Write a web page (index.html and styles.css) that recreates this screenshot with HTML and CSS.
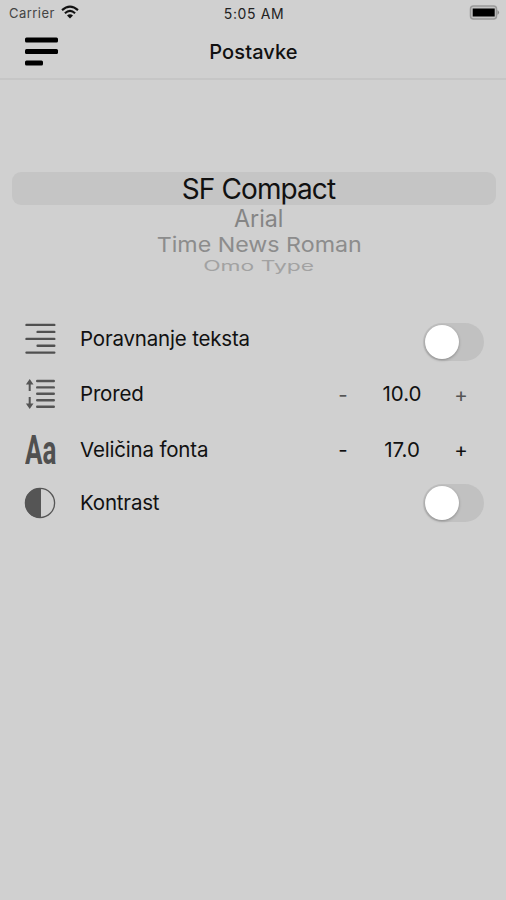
FILE: index.html
```html
<!DOCTYPE html>
<html lang="hr">
<head>
<meta charset="UTF-8">
<meta name="viewport" content="width=device-width, initial-scale=1.0">
<title>Postavke</title>
<link rel="stylesheet" href="styles.css">
</head>
<body>
<div class="status">
  <div class="carrier">
    <span>Carrier</span>
    <svg class="wifi" width="18" height="14" viewBox="0 0 18 14">
      <path d="M1 5.1Q9 -2 17 5.1M3.9 8.2Q9 3.7 14.1 8.2" fill="none" stroke="#111" stroke-width="2.1"/>
      <path d="M6 10.6Q9 8 12 10.6L9 13.6Z" fill="#111"/>
    </svg>
  </div>
  <span class="time">5:05 AM</span>
  <svg class="battery" width="31" height="16" viewBox="0 0 31 16">
    <rect x="1.5" y="1" width="26" height="13" rx="3" fill="#c4c4c4" stroke="#999" stroke-width="1.5"/>
    <rect x="3.7" y="3.5" width="22" height="8" fill="#000"/>
    <path d="M28.5 5Q31.7 7.5 28.5 10Z" fill="#888"/>
  </svg>
</div>

<header class="navbar">
  <svg class="menu" width="34" height="30" viewBox="0 0 34 30">
    <rect x="0" y="0.6" width="33" height="5" rx="1.5"/>
    <rect x="0" y="12" width="33" height="5" rx="1.5"/>
    <rect x="0" y="23.6" width="18" height="5" rx="1.5"/>
  </svg>
  <h1>Postavke</h1>
</header>

<div class="picker">
  <div class="option selected"><span>SF Compact</span></div>
  <div class="option arial"><span>Arial</span></div>
  <div class="option times"><span>Time News Roman</span></div>
  <div class="option omo"><span>Omo Type</span></div>
</div>

<div class="settings">
  <div class="row align">
    <svg class="icon" width="32" height="32" viewBox="0 0 32 32">
      <path d="M2.5 1.9H30.3M13.6 8.9H30.3M2.5 15.9H30.3M13.6 22.7H30.3M2.5 29.6H30.3" fill="none" stroke="#505050" stroke-width="2.4" stroke-linecap="round"/>
    </svg>
    <label for="align">Poravnanje teksta</label>
    <div class="switch" id="align"></div>
  </div>

  <div class="row spacing">
    <svg class="icon" width="32" height="32" viewBox="0 0 32 32">
      <path d="M13.2 3H29.8M13.2 9.4H29.8M13.2 15.7H29.8M13.2 22.3H29.8M13.2 28.7H29.8" fill="none" stroke="#555" stroke-width="2.4" stroke-linecap="round"/>
      <path d="M5.7 4V13M5.7 19V28" stroke="#555" stroke-width="2"/>
      <path d="M5.7 1L9.5 6.6H1.9ZM5.7 31L1.9 25.4H9.5Z" fill="#555"/>
    </svg>
    <label>Prored</label>
    <div class="stepper dim">
      <span class="minus">-</span>
      <span class="value">10.0</span>
      <span class="plus">+</span>
    </div>
  </div>

  <div class="row size">
    <span class="icon letters"><span>Aa</span></span>
    <label>Veličina fonta</label>
    <div class="stepper">
      <span class="minus">-</span>
      <span class="value">17.0</span>
      <span class="plus">+</span>
    </div>
  </div>

  <div class="row contrast">
    <svg class="icon" width="32" height="32" viewBox="0 0 32 32">
      <circle cx="16" cy="16" r="14.6" fill="none" stroke="#555" stroke-width="1.3"/>
      <path d="M17 1.2H16A14.8 14.8 0 0 0 16 30.8H17Z" fill="#555"/>
    </svg>
    <label for="contrast">Kontrast</label>
    <div class="switch" id="contrast"></div>
  </div>
</div>
</body>
</html>
```
FILE: styles.css
```css
* {
  box-sizing: border-box;
}
body {
  margin: 0;
  min-height: 900px;
  background: #d0d0d0;
  color: #111;
  font-family: Inter, sans-serif;
}
.status {
  display: grid;
  grid-template-columns: 1fr auto 1fr;
  align-items: center;
  height: 26px;
  padding: 0 6px 0 9px;
  font-size: 13px;
}
.carrier {
  display: flex;
  align-items: center;
  gap: 6px;
  color: #444;
  letter-spacing: 0.45px;
}
.wifi {
  margin-top: -2px;
}
.time {
  color: #222;
  font-size: 14px;
  letter-spacing: 0.6px;
  margin-right: 1px;
}
.battery {
  justify-self: end;
}
.navbar {
  display: grid;
  grid-template-columns: 1fr auto 1fr;
  align-items: center;
  height: 54px;
  padding: 0 25px;
  border-bottom: 2px solid #c6c6c6;
}
.menu {
  fill: #000;
}
h1 {
  margin: 0 0 0 1px;
  font-size: 20px;
  font-weight: 500;
  line-height: 24px;
  letter-spacing: 0.1px;
}
.picker {
  margin: 92px 10px 0 12px;
  height: 140px;
}
.option {
  display: flex;
  justify-content: center;
  align-items: center;
  padding-left: 10px;
  font-size: 27px;
  white-space: nowrap;
}
.selected {
  height: 33px;
  padding: 1px 0 0 9px;
  background: #c5c5c5;
  border-radius: 9px;
  font-size: 28px;
  letter-spacing: -0.9px;
}
.arial {
  height: 27px;
  color: #858585;
}
.arial span {
  transform: scale(0.86, 0.88);
}
.times {
  height: 24px;
  color: #8c8c8c;
}
.times span {
  transform: scale(0.86, 0.76);
}
.omo {
  height: 20px;
  color: #a2a2a2;
}
.omo span {
  transform: scale(0.845, 0.52);
}
.settings {
  padding: 0 22px 0 24px;
}
.row {
  display: flex;
  align-items: center;
  height: 54px;
  font-size: 20.5px;
}
.icon {
  width: 32px;
  height: 32px;
  margin-right: 24px;
  flex: none;
}
.row label {
  flex: 1;
  padding-bottom: 2px;
  letter-spacing: -0.18px;
}
.spacing {
  height: 56px;
}
.size {
  height: 56px;
}
.contrast {
  height: 50px;
}
.letters {
  display: flex;
  align-items: center;
  color: #505050;
  font-family: Roboto, sans-serif;
  font-size: 40px;
  font-weight: 700;
}
.letters span {
  transform: scaleX(0.65);
  transform-origin: left;
  margin-left: 1px;
}
.switch {
  width: 61px;
  height: 38px;
  padding: 2px;
  border-radius: 19px;
  background: #c1c1c1;
}
.align .switch {
  margin-top: 6px;
}
.switch::before {
  content: "";
  display: block;
  width: 34px;
  height: 34px;
  border-radius: 50%;
  background: #fff;
  box-shadow: 0 1px 3px rgba(0,0,0,0.3);
}
.stepper {
  display: grid;
  grid-template-columns: 20px 98px 20px;
  align-items: center;
  text-align: center;
  margin-right: 13px;
  padding-bottom: 2px;
}
.dim .minus,
.dim .plus {
  padding-top: 3px;
  color: #555;
}
```
